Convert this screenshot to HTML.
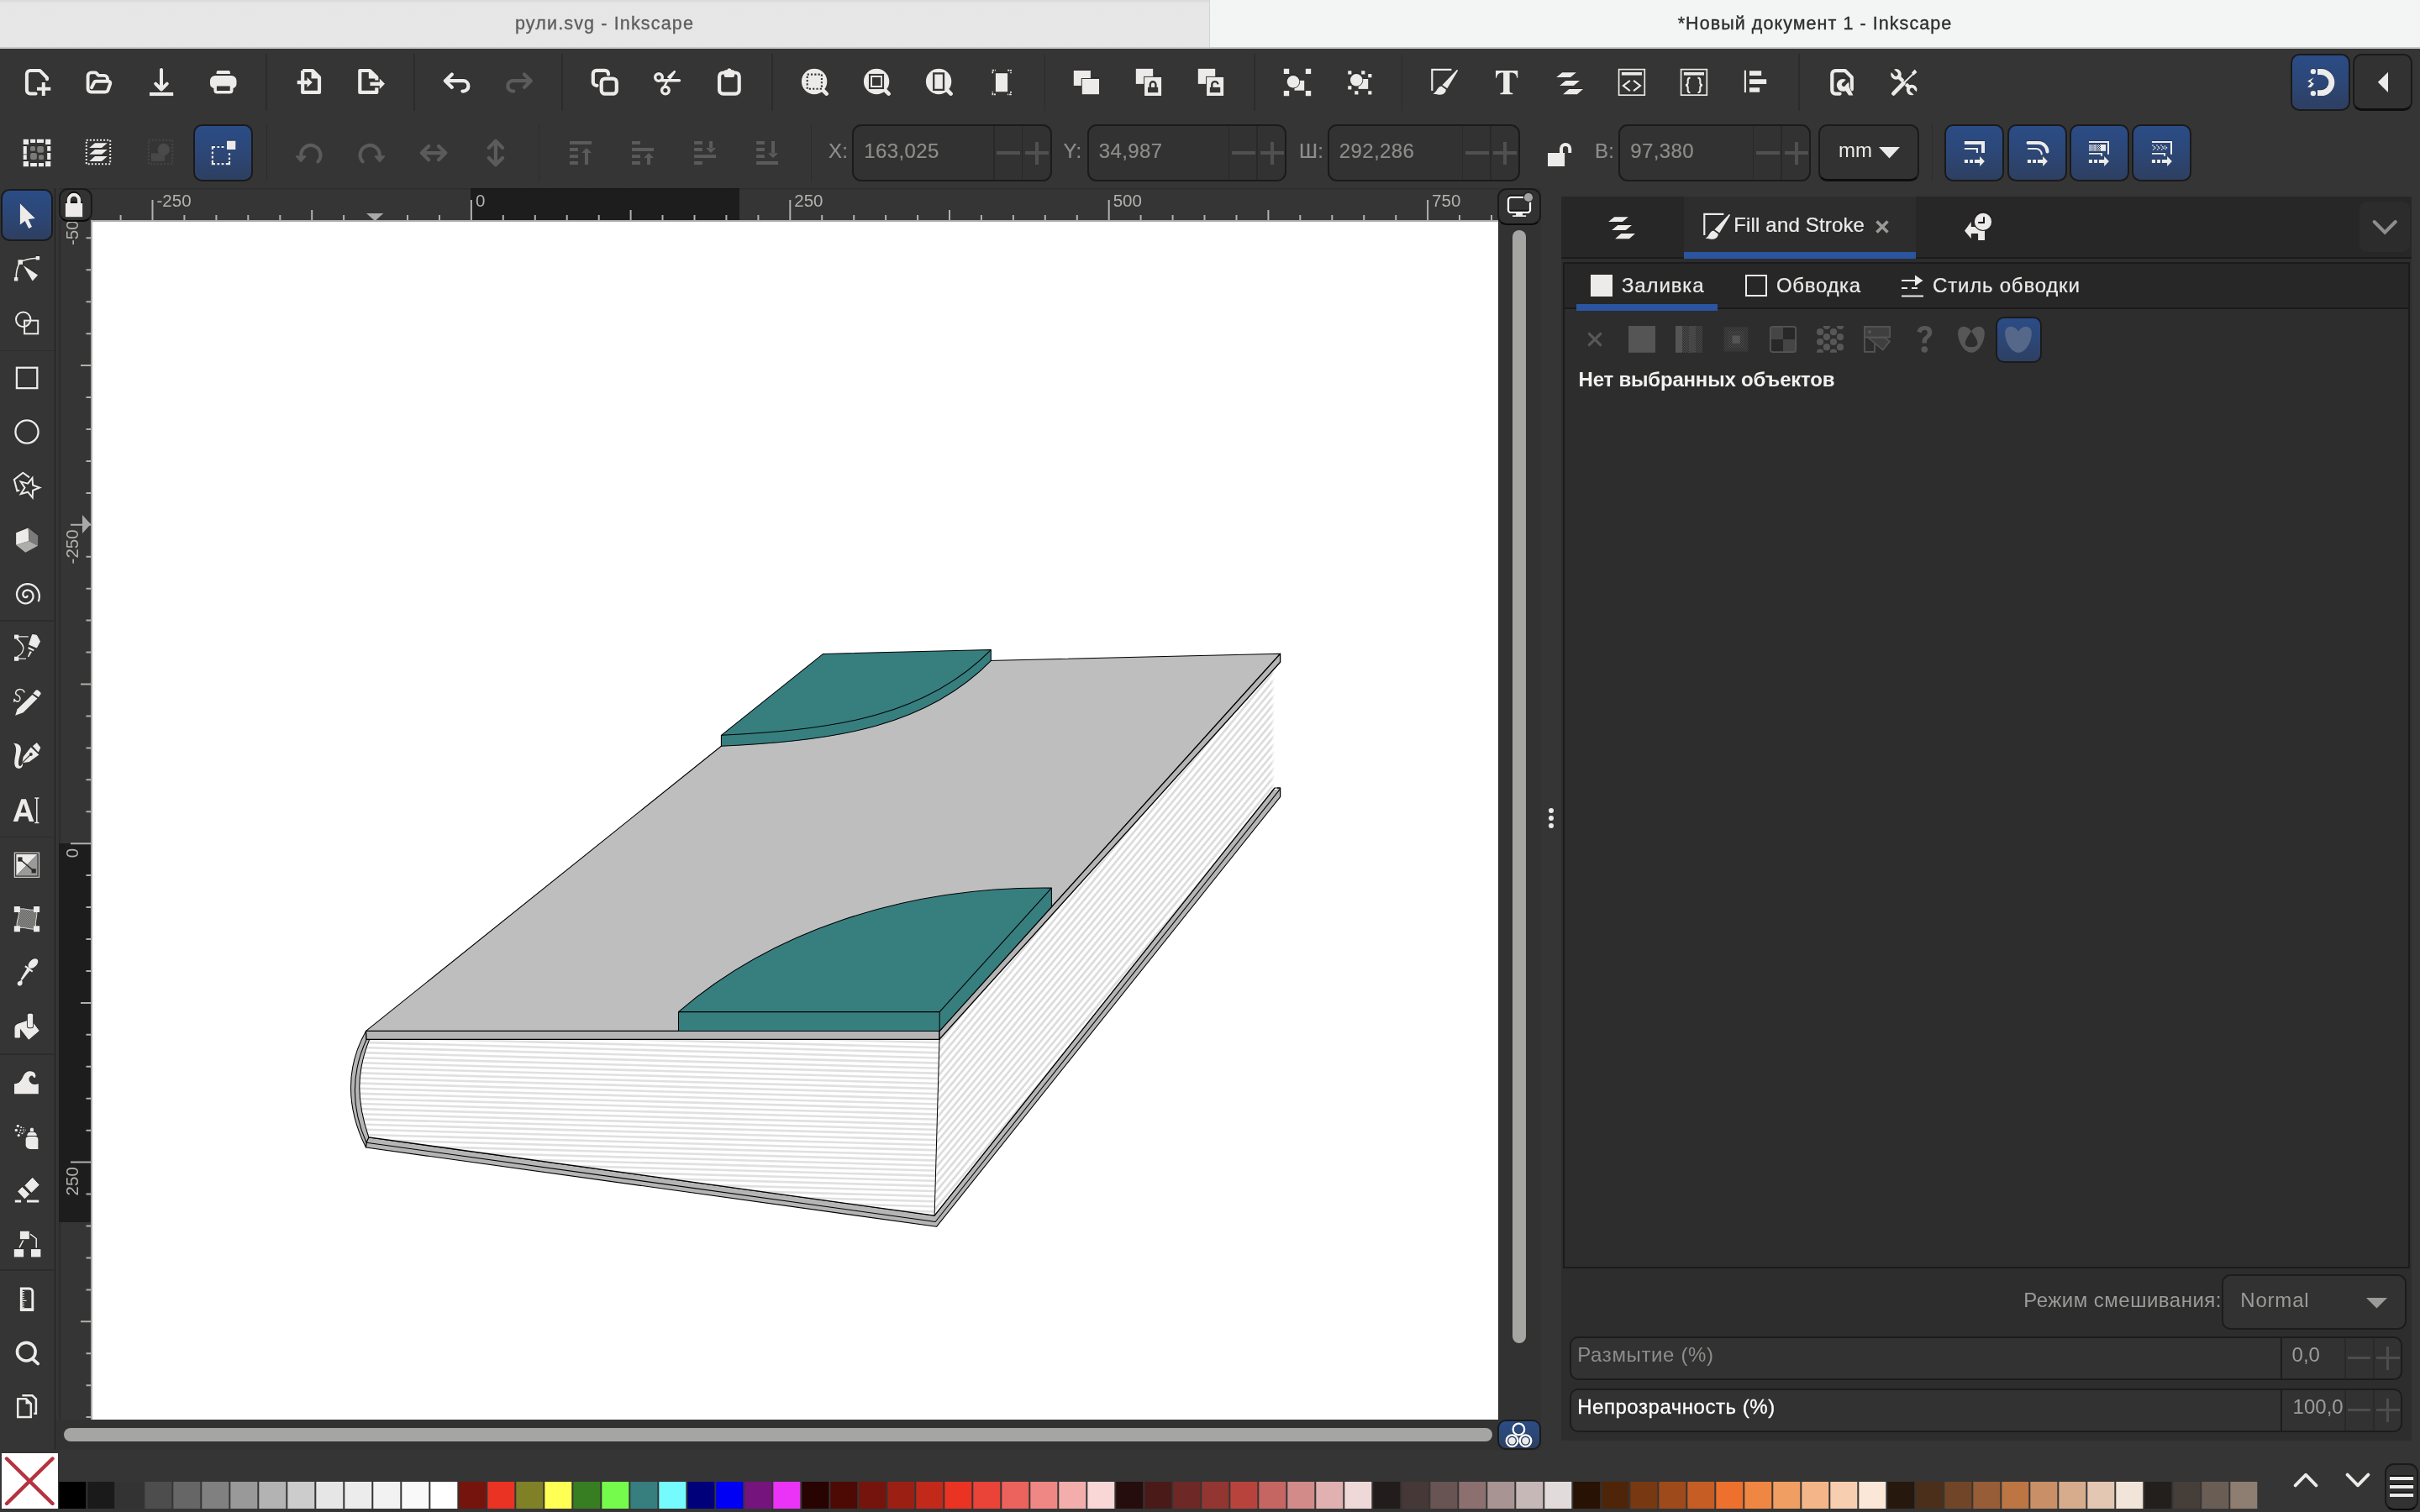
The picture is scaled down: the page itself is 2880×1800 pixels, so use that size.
<!DOCTYPE html><html><head><meta charset="utf-8"><title>Inkscape</title><style>
*{margin:0;padding:0;box-sizing:border-box}
html,body{width:2880px;height:1800px;overflow:hidden;background:#353535;font-family:"Liberation Sans",sans-serif;}
.a{position:absolute}
.ic{position:absolute;width:32px;height:32px;overflow:visible}
.sh{filter:drop-shadow(0 -1px .4px rgba(0,0,0,.24))}
.btn{position:absolute;border-radius:10.5px;border:2px solid #1a1a1a}
.blue{background:linear-gradient(#2b4c86 0%,#2c4777 48%,#2e3f61 100%)}
.dark{background:#323232}
.spin{position:absolute;height:67.4px;top:148.3px;border-radius:11px;border:2px solid #1b1b1b;background:#323232}
.spin .v{position:absolute;left:12px;top:15.7px;letter-spacing:.4px;font-size:24px;color:#8d8d8b;line-height:28px;white-space:nowrap;-webkit-text-stroke:.2px #8d8d8b}
.spin .d{position:absolute;top:0;bottom:0;width:1.5px;background:#292929}
.spin .m{position:absolute;top:30px;height:4px;width:28px;background:#505050}
.spin .p{position:absolute;top:18.4px;height:27.6px;width:4px;background:#505050}
.lbl{position:absolute;font-size:24px;color:#8d8d8b;line-height:28px;top:166px;white-space:nowrap;letter-spacing:.3px;-webkit-text-stroke:.2px #8d8d8b}
.sep{position:absolute;width:1.5px;background:#2c2c2c}
.t{position:absolute;white-space:nowrap}
</style></head><body><div id="root" style="position:absolute;left:0;top:0;width:2880px;height:1800px;will-change:transform;overflow:hidden;background:#353535">
<div class="a" style="left:0;top:0;width:1439px;height:57px;background:linear-gradient(#d9d9d9 0,#e6e6e6 4px,#e7e7e7 100%)"></div>
<div class="a" style="left:1439px;top:0;width:1.5px;height:57px;background:#d2d2d2"></div>
<div class="a" style="left:1440px;top:0;width:1440px;height:57px;background:#f3f5f5"></div>
<div class="a" style="left:0;top:56px;width:2880px;height:1.5px;background:#c9c9c9"></div>
<div class="t" id="t1" style="left:0;width:1439px;top:13.3px;text-align:center;font-size:21.5px;line-height:30px;color:#5e5e5e;letter-spacing:1.15px;-webkit-text-stroke:.35px #5e5e5e">рули.svg - Inkscape</div>
<div class="t" id="t2" style="left:1440px;width:1440px;top:13.3px;text-align:center;font-size:21.5px;line-height:30px;color:#2d2d2d;letter-spacing:1.06px;-webkit-text-stroke:.35px #2d2d2d">*Новый документ 1 - Inkscape</div>
<svg class="ic sh" style="left:29.0px;top:82.0px;width:32px;height:32px;color:#ecebe9;" viewBox="0 0 32 32"><path d="M13.6 29.6H6.9a4 4 0 0 1-4-4V6.1a4 4 0 0 1 4-4H18.6L27 10.6V12.2" fill="none" stroke="currentColor" stroke-width="4" stroke-linecap="round" stroke-linejoin="round"/><path d="M15 23.7H31.3M22.8 16V32" fill="none" stroke="currentColor" stroke-width="4" /></svg>
<svg class="ic sh" style="left:103.0px;top:82.0px;width:32px;height:32px;color:#ecebe9;" viewBox="0 0 32 32"><path d="M6 22.3L9.2 15.9a2 2 0 0 1 1.8-1.1H26.3a2 2 0 0 1 1.9 2.7L25.6 25a3.6 3.6 0 0 1-3.4 2.5H5.6a4 4 0 0 1-4-4V8.4a4 4 0 0 1 4-4H10.3a2 2 0 0 1 1.5.7l2.2 2.4a1.5 1.5 0 0 0 1.1.4H21a4 4 0 0 1 4 4V13.5" fill="none" stroke="currentColor" stroke-width="3.9" stroke-linecap="round" stroke-linejoin="round"/></svg>
<svg class="ic sh" style="left:177.0px;top:82.0px;width:32px;height:32px;color:#ecebe9;" viewBox="0 0 32 32"><path d="M15 0.9V24M8.2 17.7L15 24.5L21.8 17.7" fill="none" stroke="currentColor" stroke-width="4" stroke-linecap="round" stroke-linejoin="round"/><path d="M1 30H29.2" fill="none" stroke="currentColor" stroke-width="4.2" /></svg>
<svg class="ic sh" style="left:251.0px;top:82.0px;width:32px;height:32px;color:#ecebe9;" viewBox="0 0 32 32"><path d="M6.6 6V3.9A1.9 1.9 0 0 1 8.5 2H21A1.9 1.9 0 0 1 22.9 3.9V6Z" fill="currentColor"/><path fill-rule="evenodd" fill="currentColor" d="M5 8H24.5A6 6 0 0 1 30.5 14V17.5A5.5 5.5 0 0 1 26.5 22.9V25.6A4 4 0 0 1 22.5 29.6H7.4A4 4 0 0 1 3.4 25.6V22.9A5.5 5.5 0 0 1-1 17.5V14A6 6 0 0 1 5 8ZM6.9 20.5V26H22.7V20.5Z"/></svg>
<svg class="ic sh" style="left:352.0px;top:82.0px;width:32px;height:32px;color:#ecebe9;" viewBox="0 0 32 32"><path d="M8.2 2H20L28 10V27.9H8.2V2" fill="none" stroke="currentColor" stroke-width="4.2" stroke-linejoin="round"/><path d="M18.5 1.5V11.5H28.5Z" fill="currentColor"/><path d="M1.7 16H14.5" fill="none" stroke="currentColor" stroke-width="4.4" /><path d="M13.5 9.9L19.8 16L13.5 22.1Z" fill="currentColor"/></svg>
<svg class="ic sh" style="left:426.0px;top:82.0px;width:32px;height:32px;color:#ecebe9;" viewBox="0 0 32 32"><path d="M2.3 2H14L22.3 10V27.9H2.3Z" fill="none" stroke="currentColor" stroke-width="4.2" stroke-linejoin="round"/><path d="M12.8 1.5V11.5H22.8Z" fill="currentColor"/><path d="M16 13.5H26V22.4H16Z" fill="#353535"/><path d="M14.4 17.9H27" fill="none" stroke="currentColor" stroke-width="4.4" /><path d="M25.8 11.6L32 17.8L25.8 24Z" fill="currentColor"/></svg>
<svg class="ic sh" style="left:527.0px;top:82.0px;width:32px;height:32px;color:#ecebe9;" viewBox="0 0 32 32"><path d="M10.8 6.4L2.9 14.2L10.8 21.9M3.4 14.2H24.2a6.2 6.2 0 0 1 0 12.4h-.8" fill="none" stroke="currentColor" stroke-width="4.2" stroke-linecap="round" stroke-linejoin="round"/></svg>
<svg class="ic" style="left:601.0px;top:82.0px;width:32px;height:32px;color:#5b5b5b;" viewBox="0 0 32 32"><path d="M22.9 6.4L30.8 14.2L22.9 21.9M30.3 14.2H9.5a6.2 6.2 0 0 0 0 12.4h.8" fill="none" stroke="currentColor" stroke-width="4.2" stroke-linecap="round" stroke-linejoin="round"/></svg>
<svg class="ic sh" style="left:702.0px;top:82.0px;width:32px;height:32px;color:#ecebe9;" viewBox="0 0 32 32"><rect x="13.7" y="11.6" width="18.1" height="18.1" rx="4.3" fill="none" stroke="currentColor" stroke-width="4.2" /><path d="M22 6.4V5.9a4 4 0 0 0-4-4H7.8a4 4 0 0 0-4 4V15.8a4 4 0 0 0 4 4H8.5" fill="none" stroke="currentColor" stroke-width="4.2" stroke-linecap="round" stroke-linejoin="round"/></svg>
<svg class="ic sh" style="left:776.0px;top:82.0px;width:32px;height:32px;color:#ecebe9;" viewBox="0 0 32 32"><circle cx="8" cy="10.1" r="4.3" fill="none" stroke="currentColor" stroke-width="3.4" /><circle cx="15.9" cy="25.6" r="4.3" fill="none" stroke="currentColor" stroke-width="3.4" /><path d="M12 13.8H32.4" fill="none" stroke="currentColor" stroke-width="3.6" stroke-linecap="round" stroke-linejoin="round"/><path d="M14.6 20.8L17.6 15.2M19.5 9.8L26.8 3.2L21.5 11Z" fill="none" stroke="currentColor" stroke-width="2.6" stroke-linecap="round" stroke-linejoin="round"/><path d="M19.6 10L27 2.9L21.8 11.2Z" fill="currentColor"/></svg>
<svg class="ic sh" style="left:850.0px;top:82.0px;width:32px;height:32px;color:#ecebe9;" viewBox="0 0 32 32"><rect x="6.1" y="4.5" width="23.6" height="25.2" rx="4.5" fill="none" stroke="currentColor" stroke-width="4.2" /><path d="M11.7 3.2A2 2 0 0 1 13.7 1.2H15.2A2.9 2.9 0 0 1 20.6 1.2H22.1A2 2 0 0 1 24.1 3.2V8A2.1 2.1 0 0 1 22 10.1H13.8A2.1 2.1 0 0 1 11.7 8Z" fill="currentColor"/></svg>
<svg class="ic sh" style="left:951.0px;top:82.0px;width:32px;height:32px;color:#ecebe9;" viewBox="0 0 32 32"><circle cx="18.1" cy="15" r="15.2" fill="currentColor"/><path d="M28 25L32.6 29.6" fill="none" stroke="currentColor" stroke-width="4.6" stroke-linecap="round" stroke-linejoin="round"/><rect x="9.7" y="6.6" width="17.2" height="17.2" fill="none" stroke="#353535" stroke-width="2.1" stroke-dasharray="2.15 2.15"/></svg>
<svg class="ic sh" style="left:1025.0px;top:82.0px;width:32px;height:32px;color:#ecebe9;" viewBox="0 0 32 32"><circle cx="18.1" cy="15" r="15.2" fill="currentColor"/><path d="M28 25L32.6 29.6" fill="none" stroke="currentColor" stroke-width="4.6" stroke-linecap="round" stroke-linejoin="round"/><rect x="10" y="7" width="16" height="16" fill="none" stroke="#353535" stroke-width="2.1"/><rect x="13" y="10" width="10.2" height="10" fill="#353535"/></svg>
<svg class="ic sh" style="left:1099.0px;top:82.0px;width:32px;height:32px;color:#ecebe9;" viewBox="0 0 32 32"><circle cx="18.1" cy="15" r="15.2" fill="currentColor"/><path d="M28 25L32.6 29.6" fill="none" stroke="currentColor" stroke-width="4.6" stroke-linecap="round" stroke-linejoin="round"/><rect x="12.2" y="5.4" width="11.8" height="19.5" fill="none" stroke="#353535" stroke-width="2.3"/></svg>
<svg class="ic sh" style="left:1173.0px;top:82.0px;width:32px;height:32px;color:#ecebe9;" viewBox="0 0 32 32"><rect x="11.9" y="5.2" width="14.2" height="22" fill="currentColor"/><path d="M8.3 5.2V1.6H11.9M26.1 1.6H30V5.2M30 26.8V30.4H26.1M11.9 30.4H8.3V26.8" fill="none" stroke="currentColor" stroke-width="1.6" stroke-dasharray='2.2 1'/></svg>
<svg class="ic sh" style="left:1274.0px;top:82.0px;width:32px;height:32px;color:#ecebe9;" viewBox="0 0 32 32"><rect x="3.8" y="2" width="20.1" height="18" fill="currentColor"/><rect x="13.8" y="12" width="20.2" height="18.2" fill="currentColor" stroke="#353535" stroke-width="2" paint-order="stroke"/></svg>
<svg class="ic sh" style="left:1348.0px;top:82.0px;width:32px;height:32px;color:#ecebe9;" viewBox="0 0 32 32"><rect x="3.8" y="-.2" width="20.4" height="18.1" fill="currentColor"/><rect x="14.1" y="9.9" width="20" height="22.1" fill="currentColor" stroke="#353535" stroke-width="2" paint-order="stroke"/><rect x="18" y="21.9" width="12.2" height="6.3" fill="#353535"/><path d="M20.8 22V18.6a3.3 3.3 0 0 1 6.6 0V22" fill="none" stroke="#353535" stroke-width="2.4"/></svg>
<svg class="ic sh" style="left:1422.0px;top:82.0px;width:32px;height:32px;color:#ecebe9;" viewBox="0 0 32 32"><rect x="3.8" y="-.2" width="20.4" height="18.1" fill="currentColor"/><rect x="14.1" y="9.9" width="20" height="22.1" fill="currentColor" stroke="#353535" stroke-width="2" paint-order="stroke"/><rect x="17.8" y="21.9" width="12.4" height="6.3" fill="#353535"/><path d="M20.3 22V19a3.6 3.6 0 0 1 7.2-.6" fill="none" stroke="#353535" stroke-width="2.4"/></svg>
<svg class="ic sh" style="left:1523.0px;top:82.0px;width:32px;height:32px;color:#ecebe9;" viewBox="0 0 32 32"><path d="M4.8-.2H11.2V6.1H4.8ZM30.8-.2H37.2V6.1H30.8ZM4.8 25.9H11.2V32.2H4.8ZM30.8 25.9H37.2V32.2H30.8Z" fill="currentColor"/><rect x="17.5" y="13.8" width="11.7" height="11.9" fill="currentColor"/><circle cx="16" cy="15.3" r="7.3" fill="currentColor" stroke="#353535" stroke-width="1.8" paint-order="stroke"/></svg>
<svg class="ic sh" style="left:1604.0px;top:82.0px;width:32px;height:32px;color:#ecebe9;" viewBox="0 0 32 32"><path d="M.2 2.2H4.4V6.4H.2ZM16.2 2.2H20.4V6.4H16.2ZM24.2 6H28.4V10.2H24.2ZM.2 20.2H4.4V24.4H.2ZM8.2 26.2H12.4V30.4H8.2ZM24.2 26.2H28.4V30.4H24.2Z" fill="currentColor"/><rect x="12.6" y="12" width="11.6" height="11.9" fill="currentColor"/><circle cx="10.2" cy="13.3" r="7.2" fill="currentColor" stroke="#353535" stroke-width="1.8" paint-order="stroke"/></svg>
<svg class="ic sh" style="left:1703.4px;top:82.0px;width:32px;height:32px;color:#ecebe9;" viewBox="0 0 32 32"><path d="M1.3 26V.9H24.4" fill="none" stroke="currentColor" stroke-width="2.2" /><path d="M30.6 1.2C31.5 .8 32.3 1.6 31.8 2.5L19.3 23.2L13.4 19.2Z" fill="currentColor"/><path d="M12.3 20.6L17.8 24.4C18 29.5 12 32.6 2.5 29.6C7.5 27.5 7 21.5 12.3 20.6Z" fill="currentColor"/></svg>
<svg class="ic sh" style="left:1777.0px;top:82.0px;width:32px;height:32px;color:#ecebe9;" viewBox="0 0 32 32"><path d="M3 2.1H29.3V10.7H28.3C27.6 6.6 25.6 4.4 21.6 4.4H19.6V26C19.6 28 20.3 28.6 23.3 28.7V30.3H8.4V28.7C11.4 28.6 12.1 28 12.1 26V4.4H10.7C6.7 4.4 4.7 6.6 4 10.7H3Z" fill="currentColor"/></svg>
<svg class="ic sh" style="left:1852.0px;top:82.0px;width:32px;height:32px;color:#ecebe9;" viewBox="0 0 32 32"><path d="M.1 9.9L7.2 4.2H23.9L16.9 9.9ZM4.1 20L11.3 14.1H28L20.8 20ZM8.1 30.2L15.3 24.1H32L24.9 30.2Z" fill="currentColor"/></svg>
<svg class="ic sh" style="left:1926.0px;top:82.0px;width:32px;height:32px;color:#ecebe9;" viewBox="0 0 32 32"><rect x=".6" y=".6" width="30.7" height="30.6" fill="none" stroke="currentColor" stroke-width="1.7" /><rect x="3.9" y="3.9" width="24.1" height="3.7" fill="currentColor"/><path d="M13.8 13.8L5.9 20L13.8 26.2M18.1 13.8L26 20L18.1 26.2" fill="none" stroke="currentColor" stroke-width="2.2" /></svg>
<svg class="ic sh" style="left:2000.0px;top:82.0px;width:32px;height:32px;color:#ecebe9;" viewBox="0 0 32 32"><rect x=".6" y=".6" width="30.7" height="30.6" fill="none" stroke="currentColor" stroke-width="1.7" /><rect x="3.9" y="3.9" width="24.1" height="3.7" fill="currentColor"/><path d="M11.5 10.6C9 10.6 8.7 11.8 8.7 13.5V16.3C8.7 18 8 19.2 6 19.4C8 19.6 8.7 20.8 8.7 22.5V25.3C8.7 27 9 28.2 11.5 28.2M20.5 10.6C23 10.6 23.3 11.8 23.3 13.5V16.3C23.3 18 24 19.2 26 19.4C24 19.6 23.3 20.8 23.3 22.5V25.3C23.3 27 23 28.2 20.5 28.2" fill="none" stroke="currentColor" stroke-width="2.1" /></svg>
<svg class="ic sh" style="left:2073.0px;top:82.0px;width:32px;height:32px;color:#ecebe9;" viewBox="0 0 32 32"><path d="M3.9 1.7V28.1" fill="none" stroke="currentColor" stroke-width="2.1" /><path d="M9 2.3H23.2V7.9H9ZM9 12.2H29.2V17.9H9ZM9 22.3H21.1V27.8H9Z" fill="currentColor"/></svg>
<svg class="ic sh" style="left:2176.0px;top:82.0px;width:32px;height:32px;color:#ecebe9;" viewBox="0 0 32 32"><path d="M13.6 29.6H8.3a4 4 0 0 1-4-4V6.1a4 4 0 0 1 4-4H19.8L27.8 10.1V24.4" fill="none" stroke="currentColor" stroke-width="4.2" stroke-linecap="round" stroke-linejoin="round"/><circle cx="17.3" cy="19.4" r="8.6" fill="#353535"/><path d="M18 22.5L24 20.5L29.4 31.4H24.2Z" fill="currentColor" stroke="#353535" stroke-width="1.2" paint-order="stroke"/><circle cx="17.3" cy="19.4" r="7.4" fill="currentColor"/><g transform="rotate(-45 17.3 19.4)"><rect x="18.3" y="17.3" width="9" height="4.2" fill="#353535"/><circle cx="18.6" cy="19.4" r="2.4" fill="#353535"/></g></svg>
<svg class="ic sh" style="left:2250.0px;top:82.0px;width:32px;height:32px;color:#ecebe9;" viewBox="0 0 32 32"><path d="M6.5 6.4L25.1 25" fill="none" stroke="currentColor" stroke-width="4.4" /><circle cx="6.5" cy="6.4" r="6.3" fill="currentColor"/><circle cx="25.1" cy="25" r="6.3" fill="currentColor"/><g transform="rotate(-135 6.5 6.4)"><rect x="6.5" y="4" width="8" height="4.8" fill="#353535"/><circle cx="6.9" cy="6.4" r="2.6" fill="#353535"/></g><g transform="rotate(45 25.1 25)"><rect x="25.1" y="22.6" width="8" height="4.8" fill="#353535"/><circle cx="25.5" cy="25" r="2.6" fill="#353535"/></g><path d="M28.5 4.5L13 20" stroke="#353535" stroke-width="5" fill="none"/><path d="M15.4 17L3.4 29.4" fill="none" stroke="currentColor" stroke-width="4.8" stroke-linecap="round" stroke-linejoin="round"/><path d="M27.2 5.6L15.4 17" fill="none" stroke="currentColor" stroke-width="1.9" /><path d="M28.8 .6L31.4 3.9L27.4 7.8L24.9 4.6Z" fill="currentColor"/></svg>
<div class="sep" style="left:316.3px;top:64px;height:68px"></div>
<div class="sep" style="left:492.3px;top:64px;height:68px"></div>
<div class="sep" style="left:668.0px;top:64px;height:68px"></div>
<div class="sep" style="left:918.0px;top:64px;height:68px"></div>
<div class="sep" style="left:1242.6px;top:64px;height:68px"></div>
<div class="sep" style="left:1492.3px;top:64px;height:68px"></div>
<div class="sep" style="left:1667.9px;top:64px;height:68px"></div>
<div class="sep" style="left:2140.0px;top:64px;height:68px"></div>
<div class="btn blue" style="left:2726.3px;top:64.2px;width:71.1px;height:67.4px"></div>
<svg class="ic sh" style="left:2746.0px;top:82.0px;width:32px;height:32px;color:#ecebe9;" viewBox="0 0 32 32"><circle cx="6.9" cy="3.1" r="3.2" fill="currentColor"/><circle cx="6.9" cy="29.1" r="3.2" fill="currentColor"/><path d="M12 .1H16.3A16 16 0 0 1 16.3 32.1H12V25.2H16.3A9.1 9.1 0 0 0 16.3 7H12Z" fill="currentColor"/><path d="M7.4 10.2L.1 14.4L4.4 17L.1 22H4.1L8 17.7L3.8 15Z" fill="currentColor"/></svg>
<div class="btn dark" style="left:2800.3px;top:64.2px;width:71.1px;height:67.6px;border-bottom:3px solid #0e0e0e"></div>
<svg class="ic sh" style="left:2820.0px;top:82.0px;width:32px;height:32px;color:#ecebe9;" viewBox="0 0 32 32"><path d="M9.8 15.8L22 3.8V27.9Z" fill="currentColor"/></svg>
<svg class="ic sh" style="left:28.0px;top:166.0px;width:32px;height:32px;color:#ecebe9;" viewBox="0 0 32 32"><path d="M-.3-.2H6V6.1H-.3ZM26.1-.2H32.3V6.1H26.1ZM-.3 25.9H6V32.2H-.3ZM26.1 25.9H32.3V32.2H26.1Z" fill="currentColor"/><path d="M8.1-.2H14.1V3.9H8.1ZM15.9-.2H24V3.9H15.9ZM8.1 28.1H15.9V32.2H8.1ZM18 28.1H24V32.2H18ZM-.3 8H3.8V17.6H-.3ZM-.3 18.2H3.8V24.1H-.3ZM28.2 8H32.3V13.8H28.2ZM28.2 16H32.3V24.1H28.2Z" fill="currentColor"/><rect x="8.1" y="8" width="5.9" height="5.8" rx="1.6" fill="#7b7b79"/><rect x="16.2" y="8" width="7.8" height="7.7" rx="2" fill="#7b7b79"/><rect x="8.1" y="16" width="7.8" height="8.1" rx="2" fill="#7b7b79"/><rect x="18" y="18.2" width="6" height="5.9" rx="1.6" fill="#7b7b79"/></svg>
<svg class="ic sh" style="left:101.0px;top:166.0px;width:32px;height:32px;color:#ecebe9;" viewBox="0 0 32 32"><rect x="1.8" y=".8" width="28.4" height="28.4" fill="none" stroke="currentColor" stroke-width="2" stroke-dasharray='2.03 2.03'/><path d="M5.2 9.9L12 4.2H26.8L20 9.9ZM5.2 17.8L12 12H26.8L20 17.8ZM5.2 25.9L12 20H26.8L20 25.9Z" fill="currentColor"/></svg>
<svg class="ic" style="left:175.0px;top:166.0px;width:32px;height:32px;color:#5b5b5b;" viewBox="0 0 32 32"><rect x="1.8" y=".8" width="28.4" height="28.4" fill="none" stroke="#464646" stroke-width="2" stroke-dasharray="2.03 2.03"/><rect x="4.9" y="16.3" width="16.1" height="9.6" fill="#484848"/><circle cx="19.8" cy="12" r="7.2" fill="#4a4a4a"/></svg>
<div class="btn blue" style="left:230.4px;top:148.2px;width:71.1px;height:67.6px"></div>
<svg class="ic sh" style="left:250.0px;top:166.0px;width:32px;height:32px;color:#ecebe9;" viewBox="0 0 32 32"><rect x="20" y="1.7" width="10.3" height="10.3" fill="currentColor"/><path d="M2.9 12V9H6M8.4 9H11.2M13.6 9H16.4M2.9 14.4V17.2M2.9 19.6V22.4M2.9 24.8V29.1H6M8.4 29.1H11.2M13.6 29.1H16.4M18.8 29.1H23V26M23 24.2V21.4M23 19V16.2" fill="none" stroke="currentColor" stroke-width="2.2" /></svg>
<div class="sep" style="left:316.5px;top:148px;height:68px"></div>
<svg class="ic" style="left:352.0px;top:167.0px;width:32px;height:32px;color:#5b5b5b;" viewBox="0 0 32 32"><path d="M6.2 17.6A11.6 11.6 0 1 1 26.4 25.4" fill="none" stroke="currentColor" stroke-width="4.1" stroke-linecap="round" stroke-linejoin="round"/><path d="M.8 19.2H11.4L6.1 25Z" fill="currentColor" stroke="currentColor" stroke-width="2" stroke-linejoin="round"/></svg>
<svg class="ic" style="left:426.0px;top:167.0px;width:32px;height:32px;color:#5b5b5b;" viewBox="0 0 32 32"><path d="M25.8 17.6A11.6 11.6 0 1 0 5.6 25.4" fill="none" stroke="currentColor" stroke-width="4.1" stroke-linecap="round" stroke-linejoin="round"/><path d="M31.2 19.2H20.6L25.9 25Z" fill="currentColor" stroke="currentColor" stroke-width="2" stroke-linejoin="round"/></svg>
<svg class="ic" style="left:500.0px;top:166.0px;width:32px;height:32px;color:#5b5b5b;" viewBox="0 0 32 32"><path d="M10.1 7.9L1.9 16.1L10.1 24.3M22 7.9L30.2 16.1L22 24.3M2.5 16.1H29.6" fill="none" stroke="currentColor" stroke-width="4.2" stroke-linecap="round" stroke-linejoin="round"/></svg>
<svg class="ic" style="left:574.0px;top:166.0px;width:32px;height:32px;color:#5b5b5b;" viewBox="0 0 32 32"><path d="M7.7 10L15.9 1.8L24.1 10M7.7 22L15.9 30.2L24.1 22M15.9 2.4V29.6" fill="none" stroke="currentColor" stroke-width="4.2" stroke-linecap="round" stroke-linejoin="round"/></svg>
<div class="sep" style="left:640.5px;top:148px;height:68px"></div>
<svg class="ic" style="left:675.0px;top:166.0px;width:32px;height:32px;color:#5b5b5b;" viewBox="0 0 32 32"><path d="M3 2.1H29V6H3ZM3 10.1H12.9V14.1H3ZM3 18.2H12.9V22.1H3ZM3 26H12.9V30H3ZM21 15.5H25V30H21ZM17.2 15.9L23 10.1L29 15.9Z" fill="currentColor"/></svg>
<svg class="ic" style="left:749.0px;top:166.0px;width:32px;height:32px;color:#5b5b5b;" viewBox="0 0 32 32"><path d="M3 2.1H12.9V6H3ZM3 10.1H29V14.1H3ZM3 18.2H12.9V22.1H3ZM3 26H12.9V30H3ZM21 21.5H25V30H21ZM17.2 21.9L23 16.1L29 21.9Z" fill="currentColor"/></svg>
<svg class="ic" style="left:823.0px;top:166.0px;width:32px;height:32px;color:#5b5b5b;" viewBox="0 0 32 32"><path d="M3.1 2.1H12.9V6H3.1ZM3.1 10.1H12.9V14.1H3.1ZM3.1 18.2H29.1V22.1H3.1ZM3.1 26H12.9V30H3.1ZM21.1 2.1H25V10.5H21.1ZM17.1 10.1L23 16.1L29.1 10.1Z" fill="currentColor"/></svg>
<svg class="ic" style="left:897.0px;top:166.0px;width:32px;height:32px;color:#5b5b5b;" viewBox="0 0 32 32"><path d="M3.1 2.1H12.9V6H3.1ZM3.1 10.1H12.9V14.1H3.1ZM3.1 18.2H12.9V22.1H3.1ZM3.1 26H29.1V30H3.1ZM21.1 2.1H25V16.7H21.1ZM17.1 16.3L23 22.1L29.1 16.3Z" fill="currentColor"/></svg>
<div class="sep" style="left:964.5px;top:148px;height:68px"></div>
<div class="lbl" style="left:986px">X:</div>
<div class="spin" style="left:1014.3px;width:237.5px"><div class="v">163,025</div><div class="d" style="right:66.1px"></div><div class="d" style="right:32.5px"></div><div class="m" style="right:35.7px"></div><div class="m" style="right:1.8px"></div><div class="p" style="right:13.8px"></div></div>
<div class="lbl" style="left:1265.5px">Y:</div>
<div class="spin" style="left:1293.8px;width:237.7px"><div class="v">34,987</div><div class="d" style="right:66.1px"></div><div class="d" style="right:32.5px"></div><div class="m" style="right:35.7px"></div><div class="m" style="right:1.8px"></div><div class="p" style="right:13.8px"></div></div>
<div class="lbl" style="left:1546px">Ш:</div>
<div class="spin" style="left:1579.8px;width:229.4px"><div class="v">292,286</div><div class="d" style="right:66.1px"></div><div class="d" style="right:32.5px"></div><div class="m" style="right:35.7px"></div><div class="m" style="right:1.8px"></div><div class="p" style="right:13.8px"></div></div>
<svg class="ic sh" style="left:1840.0px;top:168.0px;width:32px;height:32px;color:#ecebe9;" viewBox="0 0 32 32"><rect x="2" y="14" width="20.1" height="16" fill="currentColor"/><path d="M18 14.5V9A5.1 5.1 0 0 1 28.2 9V14" fill="none" stroke="currentColor" stroke-width="4" /></svg>
<div class="lbl" style="left:1898px">В:</div>
<div class="spin" style="left:1926.2px;width:229.2px"><div class="v">97,380</div><div class="d" style="right:66.1px"></div><div class="d" style="right:32.5px"></div><div class="m" style="right:35.7px"></div><div class="m" style="right:1.8px"></div><div class="p" style="right:13.8px"></div></div>
<div class="btn dark" style="left:2164.2px;top:148.2px;width:119.6px;height:67.8px;border-bottom:3px solid #0e0e0e"></div>
<div class="t" style="left:2188px;top:164.5px;font-size:24px;line-height:28px;color:#ecebe9">mm</div>
<svg class="a" style="left:2235.5px;top:175px" width="25" height="14" viewBox="0 0 25 14"><path d="M0 0H25L12.5 13.5Z" fill="#ecebe9"/></svg>
<div class="sep" style="left:2298.5px;top:148px;height:68px"></div>
<div class="btn blue" style="left:2314.3px;top:148.2px;width:71.1px;height:67.6px"></div>
<svg class="ic sh" style="left:2334.0px;top:167.0px;width:32px;height:32px;color:#ecebe9;" viewBox="0 0 32 32"><path d="M3.9 23H8V27.1H3.9ZM10.1 23H14V27.1H10.1ZM15.9 23H22.5V27.1H15.9ZM22.1 19L27.9 25L22.1 30.9Z" fill="currentColor"/><path d="M3.9 1.1H28V15H24V5H3.9ZM3.9 8.9H20V15H17.9V11H3.9Z" fill="currentColor"/></svg>
<div class="btn blue" style="left:2388.5px;top:148.2px;width:71.1px;height:67.6px"></div>
<svg class="ic sh" style="left:2409.2px;top:167.0px;width:32px;height:32px;color:#ecebe9;" viewBox="0 0 32 32"><path d="M3.9 23H8V27.1H3.9ZM10.1 23H14V27.1H10.1ZM15.9 23H22.5V27.1H15.9ZM22.1 19L27.9 25L22.1 30.9Z" fill="currentColor"/><path d="M4.5 3H17A10.5 10.5 0 0 1 27.5 13.5" fill="none" stroke="currentColor" stroke-width="4" stroke-linecap="round" stroke-linejoin="round"/><path d="M4.9 10H14.2A6.5 6.5 0 0 1 20.7 16.5" fill="none" stroke="currentColor" stroke-width="2.1" stroke-linecap="round" stroke-linejoin="round"/></svg>
<div class="btn blue" style="left:2462.7px;top:148.2px;width:71.1px;height:67.6px"></div>
<svg class="ic sh" style="left:2482.4px;top:167.0px;width:32px;height:32px;color:#ecebe9;" viewBox="0 0 32 32"><path d="M3.9 23H8V27.1H3.9ZM10.1 23H14V27.1H10.1ZM15.9 23H22.5V27.1H15.9ZM22.1 19L27.9 25L22.1 30.9Z" fill="currentColor"/><path d="M4 1.1H28V16.8H26V2.9H4ZM4 15.1H20.1V18.8H18V16.8H4Z" fill="currentColor"/><defs><pattern id="chk" width="2" height="2" patternUnits="userSpaceOnUse"><rect width="1" height="1" fill="#ecebe9"/><rect x="1" y="1" width="1" height="1" fill="#ecebe9"/></pattern></defs><rect x="4" y="5" width="8" height="7.8" fill="#8e9bb8"/><rect x="4" y="5" width="3" height="7.8" fill="url(#chk)" opacity=".5"/><rect x="10.5" y="5" width="8" height="7.8" fill="url(#chk)"/><rect x="18" y="5" width="6" height="7.8" fill="currentColor"/></svg>
<div class="btn blue" style="left:2536.9px;top:148.2px;width:71.1px;height:67.6px"></div>
<svg class="ic sh" style="left:2556.6px;top:167.0px;width:32px;height:32px;color:#ecebe9;" viewBox="0 0 32 32"><path d="M3.9 23H8V27.1H3.9ZM10.1 23H14V27.1H10.1ZM15.9 23H22.5V27.1H15.9ZM22.1 19L27.9 25L22.1 30.9Z" fill="currentColor"/><path d="M4 1.1H28V16.8H26V2.9H4ZM4 15.1H20.1V18.8H18V16.8H4Z" fill="currentColor"/><path d="M4.5 5.5L8 8.9L4.5 12.3M9.5 5.5L13 8.9L9.5 12.3M14.5 5.5L18 8.9L14.5 12.3M19 6.5L21.5 8.9L19 11.3" fill="none" stroke="currentColor" stroke-width="1.5" stroke-dasharray="1.4 1"/></svg>
<div class="a" style="left:64.6px;top:224px;width:1.9px;height:1502px;background:#1f1f1f"></div>
<div class="btn blue" style="left:1.2px;top:225.4px;width:61.4px;height:61.6px"></div>
<svg class="ic sh" style="left:16.0px;top:240.5px;width:32px;height:32px;color:#ecebe9;" viewBox="0 0 32 32"><path d="M7.9 1.3V26.4L13.7 21.9L18.2 30.9L22 29L17.8 20L25.9 19.1Z" fill="currentColor"/></svg>
<svg class="ic sh" style="left:16.0px;top:303.0px;width:32px;height:32px;color:#ecebe9;" viewBox="0 0 32 32"><path d="M3.1 29.3C3.1 20 5 13 8.2 9C13 6 20 4.5 28.9 4.2" fill="none" stroke="currentColor" stroke-width="1.6" /><rect x=".9" y="27.1" width="4.4" height="4.4" fill="currentColor"/><rect x="5.4" y="6.2" width="5.6" height="5.6" fill="currentColor"/><rect x="26.7" y="2" width="4.4" height="4.4" fill="currentColor"/><path d="M11.7 12.9L29.1 24.5L22.7 31.6Z" fill="currentColor"/></svg>
<svg class="ic sh" style="left:16.0px;top:368.5px;width:32px;height:32px;color:#ecebe9;" viewBox="0 0 32 32"><path d="M13.1 12.6H20.2A8.7 8.7 0 0 1 13.1 19.9Z" fill="#585856"/><circle cx="11.7" cy="11.3" r="8.7" fill="none" stroke="currentColor" stroke-width="2" /><rect x="13.1" y="12.6" width="16.1" height="15.7" fill="none" stroke="currentColor" stroke-width="2" /></svg>
<svg class="ic sh" style="left:16.0px;top:434.0px;width:32px;height:32px;color:#ecebe9;" viewBox="0 0 32 32"><rect x="3.9" y="3.7" width="24.4" height="24.4" fill="none" stroke="currentColor" stroke-width="2.3" /></svg>
<svg class="ic sh" style="left:16.0px;top:498.0px;width:32px;height:32px;color:#ecebe9;" viewBox="0 0 32 32"><circle cx="16" cy="16" r="13.6" fill="none" stroke="currentColor" stroke-width="2.3" /></svg>
<svg class="ic sh" style="left:16.0px;top:562.0px;width:32px;height:32px;color:#ecebe9;" viewBox="0 0 32 32"><path d="M7.3 21.6L4.4 22.4L.9 9L11.3 .7L19 6.4" fill="none" stroke="currentColor" stroke-width="2.1" /><path d="M22.5 6.8L23.1 15.5L31.2 18.5L23.1 21.7L22.7 30.4L17.2 23.7L8.8 26.0L13.5 18.6L8.7 11.4L17.1 13.6Z" fill="none" stroke="currentColor" stroke-width="2" /></svg>
<svg class="ic sh" style="left:16.0px;top:626.5px;width:32px;height:32px;color:#ecebe9;" viewBox="0 0 32 32"><path d="M3.1 7.2L17.6 1.4L18.5 16.9L3.1 21.7Z" fill="currentColor"/><path d="M17.8 1.4L29.1 10.4V22.7L18.6 16.9Z" fill="#7b7b79"/><path d="M3.1 21.7L18.5 16.9L29.1 22.7L14.3 30.7Z" fill="#adadab"/></svg>
<svg class="ic sh" style="left:16.0px;top:691.5px;width:32px;height:32px;color:#ecebe9;" viewBox="0 0 32 32"><path d="M16.53 17.66L16.46 17.94L16.32 18.22L16.12 18.48L15.85 18.71L15.53 18.90L15.16 19.04L14.74 19.11L14.29 19.11L13.83 19.03L13.36 18.86L12.90 18.61L12.48 18.27L12.10 17.84L11.78 17.34L11.53 16.77L11.38 16.14L11.32 15.47L11.38 14.77L11.55 14.06L11.84 13.37L12.25 12.71L12.77 12.11L13.41 11.57L14.14 11.13L14.95 10.80L15.83 10.59L16.76 10.51L17.72 10.59L18.67 10.82L19.61 11.20L20.50 11.73L21.31 12.42L22.03 13.23L22.63 14.18L23.08 15.22L23.38 16.35L23.51 17.54L23.45 18.75L23.20 19.98L22.76 21.17L22.13 22.30L21.32 23.35L20.34 24.28L19.21 25.07L17.95 25.68L16.58 26.11L15.14 26.32L13.66 26.32L12.17 26.09L10.71 25.62L9.31 24.93L8.00 24.02L6.84 22.91L5.84 21.61L5.03 20.15L4.44 18.56L4.10 16.87L4.01 15.13L4.19 13.37L4.64 11.62L5.36 9.95L6.34 8.37L7.56 6.94L9.00 5.70L10.63 4.67L12.43 3.89L14.35 3.38L16.34 3.17L18.38 3.26L20.40 3.66L22.37 4.36L24.23 5.37L25.94 6.67L27.45 8.22L28.73 10.01L29.73 11.99L30.44 14.12L30.82 16.37L30.86 18.67L30.55 20.97L29.89 23.23" fill="none" stroke="currentColor" stroke-width="2.3" stroke-linecap="round" stroke-linejoin="round"/></svg>
<svg class="ic sh" style="left:16.0px;top:755.0px;width:32px;height:32px;color:#ecebe9;" viewBox="0 0 32 32"><rect x="1" y=".6" width="5.2" height="5" fill="currentColor"/><rect x="1" y="26.7" width="5.2" height="5.1" fill="currentColor"/><path d="M6 2.8H17.8M6 29.2H15" fill="none" stroke="currentColor" stroke-width="1.3" /><path d="M4 5.6C10 10 12.5 15 11.7 18C11 22 8 25 4.6 26.7" fill="none" stroke="currentColor" stroke-width="1.4" /><path d="M22.5 .6L27.5 1.2L31.5 8.6L27.6 16L18.6 12.2Z" fill="currentColor" stroke="currentColor" stroke-width="1" stroke-linejoin="round"/><path d="M17.8 15.1L24.6 18.3L24 20.2L17.3 17.3Z" fill="currentColor"/><path d="M19.5 20.2L22 21.1L18.2 27.3L16.9 26.7Z" fill="currentColor"/></svg>
<svg class="ic sh" style="left:16.0px;top:819.5px;width:32px;height:32px;color:#ecebe9;" viewBox="0 0 32 32"><path d="M26.6 1.8A2 2 0 0 1 29 1.6L32 4A2 2 0 0 1 32.4 6.3L29.8 10.1L23.3 5.6Z" fill="currentColor"/><path d="M22.4 6.9L28.5 11.4L11.7 28.2L2.1 31.7L4.6 24.3Z" fill="currentColor"/><path d="M13 3.9C12 1 8.5 -.3 5.5 1C2 2.5 1.6 6.5 5 7.6C8.5 9 8.8 13 6.5 14.6C4.5 16 2 14.5 1 12.2M1 12.2L.8 15.3" fill="none" stroke="currentColor" stroke-width="1.5" stroke-linecap="round" stroke-linejoin="round"/></svg>
<svg class="ic sh" style="left:16.0px;top:883.5px;width:32px;height:32px;color:#ecebe9;" viewBox="0 0 32 32"><path d="M.1 .7C7 1 10 4.5 8.6 11C7.5 16.5 5.2 22 6.2 26.2C6.8 28.6 8.4 28.6 9.4 27L11 24.6C11.6 28.6 9 31.4 5.6 30.8C1 30 .6 24.5 1.8 18C3 11.5 4.6 5 .1 .7Z" fill="currentColor"/><path d="M10.4 24.2L11.7 17.1L20.8 5.5L30.4 14.5L18.8 22.9Z" fill="currentColor"/><path d="M22.9 4.3L27.8 -.1L32.4 6.1L29.6 11.4Z" fill="currentColor"/><circle cx="20.8" cy="13.9" r="2" fill="#353535"/><path d="M10.4 24.2L19.6 15" stroke="#353535" stroke-width="1.1"/></svg>
<svg class="ic sh" style="left:16.0px;top:948.5px;width:32px;height:32px;color:#ecebe9;" viewBox="0 0 32 32"><path d="M-.3 29L9.3 2.2H14.9L24.4 29H18.8L16.8 22.9H7.2L5.2 29ZM8.5 18.6H15.5L12.05 7.4Z" fill="currentColor"/><path d="M27.8 1.5V30M25.3 .9H27L27.8 1.8L28.6 .9H30.4M25.3 30.6H27L27.8 29.7L28.6 30.6H30.4" fill="none" stroke="currentColor" stroke-width="1.5" /></svg>
<svg class="ic sh" style="left:16.0px;top:1013.5px;width:32px;height:32px;color:#ecebe9;" viewBox="0 0 32 32"><rect x="1.4" y="1.2" width="29.1" height="29.1" fill="none" stroke="#c9c9c7" stroke-width="1.3"/><path d="M3.3 3.1H28.5L3.3 28.5Z" fill="#ecebe9"/><path d="M28.5 3.1V28.5H3.3Z" fill="#9a9a98"/><path d="M7.9 9L24.2 22.8" stroke="#2c2c2c" stroke-width="1.6"/><rect x="5.3" y="6.4" width="5.2" height="5.2" fill="#2c2c2c"/><rect x="21.6" y="20.2" width="5.2" height="5.2" fill="#2c2c2c"/></svg>
<svg class="ic sh" style="left:16.0px;top:1077.5px;width:32px;height:32px;color:#ecebe9;" viewBox="0 0 32 32"><defs><pattern id="mchk" width="1.6" height="1.6" patternUnits="userSpaceOnUse"><rect width=".8" height=".8" fill="#a8a8a6"/><rect x=".8" y=".8" width=".8" height=".8" fill="#a8a8a6"/></pattern></defs><path d="M6 4.5C12 2 20 7 27 4.5C30 12 24 20 27.5 27.5C20 30 12 24 5 27.5C1.5 20 8.5 12 6 4.5Z" fill="#4a4a4a"/><path d="M6 4.5C12 2 20 7 27 4.5C30 12 24 20 27.5 27.5C20 30 12 24 5 27.5C1.5 20 8.5 12 6 4.5Z" fill="url(#mchk)" stroke="currentColor" stroke-width=".9"/><path d="M.8 .9H7.9V8H.8ZM24 .9H31.1V8H24ZM.8 24.2H7.9V31.3H.8ZM24 24.2H31.1V31.3H24Z" fill="currentColor"/></svg>
<svg class="ic sh" style="left:16.0px;top:1142.0px;width:32px;height:32px;color:#ecebe9;" viewBox="0 0 32 32"><ellipse cx="23.4" cy="5" rx="7" ry="4.4" transform="rotate(-45 23.4 5)" fill="currentColor"/><path d="M13.9 8.2L22.7 14.7" fill="none" stroke="currentColor" stroke-width="2.1" /><path d="M17 9.5L20.6 12.2L10.3 25L8.5 23.8Z" fill="currentColor"/><path d="M9.8 24.5C11.5 28 10.5 31 8 31.5C5.5 32 4 29.5 5 27.5C6 26 8 25.8 9.8 24.5Z" fill="currentColor"/></svg>
<svg class="ic sh" style="left:16.0px;top:1205.5px;width:32px;height:32px;color:#ecebe9;" viewBox="0 0 32 32"><path d="M2 29V17.5C2 15 3.5 13.8 6 13L16.9 9.3L23.1 11.6L30.2 21.1L18.2 31.2L7.4 17.2V29Z" fill="currentColor" stroke="currentColor" stroke-width="1" stroke-linejoin="round"/><rect x="16.9" y=".7" width="6.2" height="16.5" rx="1.6" fill="currentColor" stroke="#353535" stroke-width="1.9" paint-order="stroke"/></svg>
<svg class="ic sh" style="left:16.0px;top:1273.0px;width:32px;height:32px;color:#ecebe9;" viewBox="0 0 32 32"><path d="M1 29.2V17.2C7 17.2 9.5 13 11.5 8.5C13.5 4 16.5 2.2 20 2.2C24 2.2 26.8 5 26.3 8.5C26 10.3 24.3 10.6 23.8 9.3C23.2 7.4 21.3 7 19.8 8.5C17.3 11 18.5 15.2 22 17.2C24.5 18.4 27 17.8 29.8 17.2V29.2Z" fill="currentColor"/></svg>
<svg class="ic sh" style="left:16.0px;top:1336.5px;width:32px;height:32px;color:#ecebe9;" viewBox="0 0 32 32"><path d="M14.6 19.5A3.6 3.6 0 0 1 18.2 15.9H25.8A3.6 3.6 0 0 1 29.4 19.5V30.9H20C17 30.9 14.6 28.5 14.6 26Z" fill="currentColor"/><path d="M16.2 14.9C16.2 12.5 18 10.7 20 10.7H24C26 10.7 27.8 12.5 27.8 14.9Z" fill="currentColor"/><path d="M19.9 10.1V7.5A2 2 0 0 1 24 7.5V10.1Z" fill="currentColor"/><circle cx="5.3" cy="3.3" r="1.6" fill="currentColor"/><circle cx="3.3" cy="8.4" r="1.7" fill="currentColor"/><circle cx="6.2" cy="14.6" r="1.6" fill="currentColor"/><circle cx="9.1" cy="4.9" r="1" fill="currentColor"/><circle cx="8.5" cy="8.4" r="1" fill="currentColor"/><circle cx="10.4" cy="12.2" r="1" fill="currentColor"/><circle cx="11.7" cy="8.1" r=".8" fill="currentColor"/><circle cx="14.2" cy="8.1" r=".7" fill="currentColor"/><circle cx="7.4" cy="11.4" r=".8" fill="currentColor"/><circle cx="12" cy="5.6" r=".7" fill="currentColor"/><circle cx="12.5" cy="10.5" r=".7" fill="currentColor"/></svg>
<svg class="ic sh" style="left:16.0px;top:1400.5px;width:32px;height:32px;color:#ecebe9;" viewBox="0 0 32 32"><path d="M22.7 1.3L30.2 9.6L21.4 18.3L13.9 10.3Z" fill="currentColor" stroke="currentColor" stroke-width="1" stroke-linejoin="round"/><path d="M10.4 12.6L18.6 20.6L13.4 25.8L5.7 17.4Z" fill="currentColor" stroke="currentColor" stroke-width="1" stroke-linejoin="round"/><path d="M1.8 28.9H9.1M16 28.9H30.2" fill="none" stroke="currentColor" stroke-width="3" /></svg>
<svg class="ic sh" style="left:16.0px;top:1464.5px;width:32px;height:32px;color:#ecebe9;" viewBox="0 0 32 32"><rect x="7.9" y=".7" width="10.9" height="9.4" fill="currentColor"/><rect x=".8" y="22.1" width="11.3" height="9.3" fill="currentColor"/><rect x="21" y="22.1" width="11.4" height="9.3" fill="currentColor"/><path d="M11.7 11.4L7 20.4M20.1 4.1L27.2 9.5V20.4" fill="none" stroke="currentColor" stroke-width="1.5" /></svg>
<svg class="ic sh" style="left:16.0px;top:1531.0px;width:32px;height:32px;color:#ecebe9;" viewBox="0 0 32 32"><path d="M9.3 28.1V3H19A3.8 3.8 0 0 1 22.8 6.8V28.1" fill="none" stroke="currentColor" stroke-width="2.9" /><path d="M7.9 28.1H24.2" fill="none" stroke="currentColor" stroke-width="3.8" /><path d="M10.5 6.5H13M10.5 9.4H13M10.5 12.2H13M10.5 14.8H13M10.5 17.4H15.5M10.5 20H13M10.5 22.6H13M10.5 25.2H13" fill="none" stroke="currentColor" stroke-width="1.1" /></svg>
<svg class="ic sh" style="left:16.0px;top:1595.0px;width:32px;height:32px;color:#ecebe9;" viewBox="0 0 32 32"><circle cx="15.3" cy="14.2" r="10.8" fill="none" stroke="currentColor" stroke-width="3.6" /><path d="M23 22.9L29.1 28.4" fill="none" stroke="currentColor" stroke-width="3.8" stroke-linecap="round" stroke-linejoin="round"/></svg>
<svg class="ic sh" style="left:16.0px;top:1658.0px;width:32px;height:32px;color:#ecebe9;" viewBox="0 0 32 32"><path d="M5.2 7.2H15L20.8 13V29H5.2Z" fill="none" stroke="currentColor" stroke-width="2.5" /><path d="M14.5 6.5V13.6H21.5Z" fill="currentColor"/><path d="M10.4 3.3H22.5L26.9 7.6V24.8H24.2" fill="none" stroke="currentColor" stroke-width="2.5" /></svg>
<div class="a" style="left:0;top:416.7px;width:64px;height:1.5px;background:#2c2c2c"></div>
<div class="a" style="left:0;top:738.0px;width:64px;height:1.5px;background:#2c2c2c"></div>
<div class="a" style="left:0;top:995.8px;width:64px;height:1.5px;background:#2c2c2c"></div>
<div class="a" style="left:0;top:1254.3px;width:64px;height:1.5px;background:#2c2c2c"></div>
<div class="a" style="left:0;top:1511.3px;width:64px;height:1.5px;background:#2c2c2c"></div>
<div class="a" style="left:109px;top:264px;width:1673.5px;height:1426px;background:#fff"></div>
<div class="a" style="left:70px;top:224px;width:1712.5px;height:38.5px;background:linear-gradient(#2b2b2b 0,#353535 2.5px,#353535 100%)"></div>
<div class="a" style="left:559.8px;top:224px;width:320.3px;height:38.5px;background:linear-gradient(#161716 0,#1c1d1c 2.5px,#1c1d1c 100%)"></div>
<div class="a" style="left:109px;top:261.8px;width:1673.5px;height:2.2px;background:#ababa9"></div>
<div class="a" style="left:70.3px;top:262px;width:38.7px;height:1428px;background:linear-gradient(to right,#2b2b2b 0,#353535 4px,#353535 100%)"></div>
<div class="a" style="left:70.3px;top:1004px;width:38.7px;height:451px;background:#1c1d1c"></div>
<div class="a" style="left:107.8px;top:262px;width:2.2px;height:1428px;background:#ababa9"></div>
<svg class="a" style="left:0;top:0" width="2880" height="1800" viewBox="0 0 2880 1800"><defs><clipPath id="hr"><rect x="109" y="224" width="1673.5" height="40"/></clipPath><clipPath id="vr"><rect x="70.5" y="264" width="39" height="1426"/></clipPath></defs><g clip-path="url(#hr)" stroke="#b0b0ae" stroke-width="2"><path d="M29.7 256V262"/><path d="M67.7 256V262"/><path d="M105.6 256V262"/><path d="M143.6 256V262"/><path d="M181.5 238V262"/><path d="M219.4 256V262"/><path d="M257.4 256V262"/><path d="M295.3 256V262"/><path d="M333.3 256V262"/><path d="M371.2 250V262"/><path d="M409.1 256V262"/><path d="M447.1 256V262"/><path d="M485.0 256V262"/><path d="M523.0 256V262"/><path d="M560.9 238V262"/><path d="M598.8 256V262"/><path d="M636.8 256V262"/><path d="M674.7 256V262"/><path d="M712.7 256V262"/><path d="M750.6 250V262"/><path d="M788.5 256V262"/><path d="M826.5 256V262"/><path d="M864.4 256V262"/><path d="M902.4 256V262"/><path d="M940.3 238V262"/><path d="M978.2 256V262"/><path d="M1016.2 256V262"/><path d="M1054.1 256V262"/><path d="M1092.1 256V262"/><path d="M1130.0 250V262"/><path d="M1167.9 256V262"/><path d="M1205.9 256V262"/><path d="M1243.8 256V262"/><path d="M1281.8 256V262"/><path d="M1319.7 238V262"/><path d="M1357.6 256V262"/><path d="M1395.6 256V262"/><path d="M1433.5 256V262"/><path d="M1471.5 256V262"/><path d="M1509.4 250V262"/><path d="M1547.3 256V262"/><path d="M1585.3 256V262"/><path d="M1623.2 256V262"/><path d="M1661.2 256V262"/><path d="M1699.1 238V262"/><path d="M1737.0 256V262"/><path d="M1775.0 256V262"/><path d="M1812.9 256V262"/><path d="M1850.9 256V262"/></g><g clip-path="url(#vr)" stroke="#b0b0ae" stroke-width="2"><path d="M102.5 169.5H108"/><path d="M102.5 207.5H108"/><path d="M84 245.4H108"/><path d="M102.5 283.3H108"/><path d="M102.5 321.3H108"/><path d="M102.5 359.2H108"/><path d="M102.5 397.2H108"/><path d="M96 435.1H108"/><path d="M102.5 473.0H108"/><path d="M102.5 511.0H108"/><path d="M102.5 548.9H108"/><path d="M102.5 586.9H108"/><path d="M84 624.8H108"/><path d="M102.5 662.7H108"/><path d="M102.5 700.7H108"/><path d="M102.5 738.6H108"/><path d="M102.5 776.6H108"/><path d="M96 814.5H108"/><path d="M102.5 852.4H108"/><path d="M102.5 890.4H108"/><path d="M102.5 928.3H108"/><path d="M102.5 966.3H108"/><path d="M84 1004.2H108"/><path d="M102.5 1042.1H108"/><path d="M102.5 1080.1H108"/><path d="M102.5 1118.0H108"/><path d="M102.5 1156.0H108"/><path d="M96 1193.9H108"/><path d="M102.5 1231.8H108"/><path d="M102.5 1269.8H108"/><path d="M102.5 1307.7H108"/><path d="M102.5 1345.7H108"/><path d="M84 1383.6H108"/><path d="M102.5 1421.5H108"/><path d="M102.5 1459.5H108"/><path d="M102.5 1497.4H108"/><path d="M102.5 1535.4H108"/><path d="M96 1573.3H108"/><path d="M102.5 1611.2H108"/><path d="M102.5 1649.2H108"/><path d="M102.5 1687.1H108"/><path d="M102.5 1725.1H108"/></g><text x="186.5" y="246" font-size="20.5" fill="#b2b2b0" font-family="Liberation Sans">-250</text><text x="565.9" y="246" font-size="20.5" fill="#b2b2b0" font-family="Liberation Sans">0</text><text x="945.3" y="246" font-size="20.5" fill="#b2b2b0" font-family="Liberation Sans">250</text><text x="1324.7" y="246" font-size="20.5" fill="#b2b2b0" font-family="Liberation Sans">500</text><text x="1704.1" y="246" font-size="20.5" fill="#b2b2b0" font-family="Liberation Sans">750</text><g clip-path="url(#vr)"><text transform="translate(92.6 251.0) rotate(-90)" text-anchor="end" font-size="20.5" fill="#b2b2b0" font-family="Liberation Sans">-500</text><text transform="translate(92.6 630.4) rotate(-90)" text-anchor="end" font-size="20.5" fill="#b2b2b0" font-family="Liberation Sans">-250</text><text transform="translate(92.6 1009.8) rotate(-90)" text-anchor="end" font-size="20.5" fill="#b2b2b0" font-family="Liberation Sans">0</text><text transform="translate(92.6 1389.2) rotate(-90)" text-anchor="end" font-size="20.5" fill="#b2b2b0" font-family="Liberation Sans">250</text></g><path d="M436 254H456.4L446.2 263Z" fill="#a9a9a9"/><path d="M98 613V635L108 624Z" fill="#a9a9a9"/></svg>
<div class="btn dark" style="left:70.3px;top:223.8px;width:39.7px;height:40px;border-radius:11px;background:#323232;border-bottom-color:#0a0a0a"></div>
<svg class="ic sh" style="left:72.0px;top:228.0px;width:32px;height:32px;color:#ecebe9;" viewBox="0 0 32 32"><g transform="translate(0 -1.5)"><rect x="5.9" y="13.9" width="20.3" height="16.3" fill="#000"/><path d="M9.8 14.5V9.95A6.15 6.15 0 0 1 22.1 9.95V14.5" fill="none" stroke="#000" stroke-width="4"/></g><rect x="5.9" y="13.9" width="20.3" height="16.3" fill="currentColor"/><path d="M9.8 14.5V9.95A6.15 6.15 0 0 1 22.1 9.95V14.5" fill="none" stroke="currentColor" stroke-width="4"/></svg>
<svg class="a" style="left:0;top:0" width="2880" height="1800" viewBox="0 0 2880 1800"><defs>
<pattern id="st1" width="40" height="6.1" patternUnits="userSpaceOnUse" patternTransform="translate(0 1239.5) rotate(1.55)"><rect x="0" y="0" width="40" height="2.2" fill="#e0e0e0"/></pattern>
<pattern id="st2" width="40" height="6.15" patternUnits="userSpaceOnUse" patternTransform="translate(1118 1239) rotate(-50.3)"><rect x="0" y="0" width="40" height="2.3" fill="#dcdcdc"/></pattern>
<linearGradient id="fade" x1="1512.5" x2="1517" y1="0" y2="0" gradientUnits="userSpaceOnUse"><stop offset="0" stop-color="#fff" stop-opacity="0"/><stop offset="1" stop-color="#fff" stop-opacity="1"/></linearGradient>
</defs><path d="M1112.1 1447.1L1517 938H1523.6V948.6L1114.5 1460.3L435.5 1366L436 1360L438.8 1353.9Z" fill="#b5b5b5" stroke="#000" stroke-width="1.05" stroke-linejoin="round"/><path d="M1118 1237.2L1517 796.4L1517.5 938L1112.1 1447.1Z" fill="#fff"/><clipPath id="cpR"><path d="M1118 1237.2L1517 796.4L1517.5 938L1112.1 1447.1Z"/></clipPath><path clip-path="url(#cpR)" d="M661.4 1771.2L1555.7 694.1M666.1 1775.2L1560.4 698.0M670.9 1779.1L1565.1 701.9M675.6 1783.0L1569.9 705.8M680.3 1786.9L1574.6 709.8M685.1 1790.9L1579.3 713.7M689.8 1794.8L1584.1 717.6M694.5 1798.7L1588.8 721.6M699.3 1802.7L1593.5 725.5M704.0 1806.6L1598.3 729.4M708.7 1810.5L1603.0 733.3M713.4 1814.4L1607.7 737.3M718.2 1818.4L1612.5 741.2M722.9 1822.3L1617.2 745.1M727.6 1826.2L1621.9 749.1M732.4 1830.1L1626.7 753.0M737.1 1834.1L1631.4 756.9M741.8 1838.0L1636.1 760.8M746.6 1841.9L1640.8 764.8M751.3 1845.9L1645.6 768.7M756.0 1849.8L1650.3 772.6M760.8 1853.7L1655.0 776.6M765.5 1857.6L1659.8 780.5M770.2 1861.6L1664.5 784.4M775.0 1865.5L1669.2 788.3M779.7 1869.4L1674.0 792.3M784.4 1873.4L1678.7 796.2M789.2 1877.3L1683.4 800.1M793.9 1881.2L1688.2 804.1M798.6 1885.1L1692.9 808.0M803.4 1889.1L1697.6 811.9M808.1 1893.0L1702.4 815.8M812.8 1896.9L1707.1 819.8M817.5 1900.9L1711.8 823.7M822.3 1904.8L1716.6 827.6M827.0 1908.7L1721.3 831.6M831.7 1912.6L1726.0 835.5M836.5 1916.6L1730.8 839.4M841.2 1920.5L1735.5 843.3M845.9 1924.4L1740.2 847.3M850.7 1928.4L1744.9 851.2M855.4 1932.3L1749.7 855.1M860.1 1936.2L1754.4 859.1M864.9 1940.1L1759.1 863.0M869.6 1944.1L1763.9 866.9M874.3 1948.0L1768.6 870.8M879.1 1951.9L1773.3 874.8M883.8 1955.9L1778.1 878.7M888.5 1959.8L1782.8 882.6M893.3 1963.7L1787.5 886.6M898.0 1967.6L1792.3 890.5M902.7 1971.6L1797.0 894.4M907.5 1975.5L1801.7 898.3M912.2 1979.4L1806.5 902.3M916.9 1983.4L1811.2 906.2M921.6 1987.3L1815.9 910.1M926.4 1991.2L1820.7 914.1M931.1 1995.1L1825.4 918.0M935.8 1999.1L1830.1 921.9M940.6 2003.0L1834.9 925.8M945.3 2006.9L1839.6 929.8M950.0 2010.9L1844.3 933.7" stroke="#dcdcdc" stroke-width="2.7" fill="none"/><rect x="1506" y="790" width="14" height="150" fill="url(#fade)"/><path d="M1112.1 1447.1L1517 938" fill="none" stroke="#000" stroke-width="1.3" stroke-linejoin="round"/><path d="M1113.2 1454.5L1523.6 939.2" fill="none" stroke="#000" stroke-width="1.05" stroke-linejoin="round"/><path d="M1517 938H1523.6V948.6" fill="none" stroke="#000" stroke-width="1.05" stroke-linejoin="round"/><path d="M439.7 1237.4H1118L1112.1 1447.1L438.8 1353.9C424 1310 424 1276 439.7 1237.4Z" fill="#fff"/><clipPath id="cpF"><path d="M439.7 1237.4H1118L1112.1 1447.1L438.8 1353.9C424 1310 424 1276 439.7 1237.4Z"/></clipPath><path clip-path="url(#cpF)" d="M-358.9 1189.1L1240.5 1232.4M-359.0 1195.2L1240.4 1238.4M-359.2 1201.3L1240.2 1244.5M-359.4 1207.4L1240.0 1250.6M-359.5 1213.5L1239.9 1256.7M-359.7 1219.6L1239.7 1262.8M-359.9 1225.7L1239.5 1268.9M-360.0 1231.8L1239.4 1275.0M-360.2 1237.9L1239.2 1281.1M-360.4 1244.0L1239.0 1287.2M-360.5 1250.0L1238.9 1293.3M-360.7 1256.1L1238.7 1299.4M-360.9 1262.2L1238.6 1305.5M-361.0 1268.3L1238.4 1311.6M-361.2 1274.4L1238.2 1317.7M-361.4 1280.5L1238.1 1323.8M-361.5 1286.6L1237.9 1329.9M-361.7 1292.7L1237.7 1336.0M-361.9 1298.8L1237.6 1342.1M-362.0 1304.9L1237.4 1348.2M-362.2 1311.0L1237.2 1354.3M-362.3 1317.1L1237.1 1360.4M-362.5 1323.2L1236.9 1366.5M-362.7 1329.3L1236.7 1372.6M-362.8 1335.4L1236.6 1378.7M-363.0 1341.5L1236.4 1384.8M-363.2 1347.6L1236.2 1390.9M-363.3 1353.7L1236.1 1397.0M-363.5 1359.8L1235.9 1403.1M-363.7 1365.9L1235.7 1409.2M-363.8 1372.0L1235.6 1415.3M-364.0 1378.1L1235.4 1421.4M-364.2 1384.2L1235.3 1427.5M-364.3 1390.3L1235.1 1433.6M-364.5 1396.4L1234.9 1439.7M-364.7 1402.5L1234.8 1445.8M-364.8 1408.6L1234.6 1451.9M-365.0 1414.7L1234.4 1458.0M-365.2 1420.8L1234.3 1464.1M-365.3 1426.9L1234.1 1470.2M-365.5 1433.0L1233.9 1476.3M-365.6 1439.1L1233.8 1482.4M-365.8 1445.2L1233.6 1488.5M-366.0 1451.3L1233.4 1494.6M-366.1 1457.4L1233.3 1500.7" stroke="#e0e0e0" stroke-width="2.6" fill="none"/><path d="M1118 1237.4L1112.1 1447.1" fill="none" stroke="#000" stroke-width="1"/><path d="M435.5 1227.4C411.5 1270 411.5 1318 435.5 1366L436 1360.2L438.8 1353.9C424 1310 424 1276 439.7 1237.4L436 1237Z" fill="#b5b5b5" stroke="#000" stroke-width="1.05" stroke-linejoin="round"/><path d="M436.3 1237C417.5 1278 417.5 1318 436 1360.2" fill="none" stroke="#000" stroke-width="1.05" stroke-linejoin="round"/><path d="M438.8 1353.9L1112.1 1447.1" fill="none" stroke="#000" stroke-width="1.3" stroke-linejoin="round"/><path d="M436 1360.2L1113.2 1454.5" fill="none" stroke="#000" stroke-width="1.05" stroke-linejoin="round"/><path d="M435.5 1227.4L979.6 791L1523.6 778.3L1118 1227.5Z" fill="#bebebe" stroke="#000" stroke-width="1.05" stroke-linejoin="round"/><path d="M435.5 1227.4H1118V1237.3H436Z" fill="#b5b5b5" stroke="#000" stroke-width="1.3" stroke-linejoin="round"/><path d="M1118 1227.5L1523.6 778.3V788.3L1118 1237.3Z" fill="#b5b5b5" stroke="#000" stroke-width="1.3" stroke-linejoin="round"/><path d="M858.4 888.3V875.3L979.6 778.4L1179.3 773.6V786.7C1103.1 864.2 996.4 882.4 858.4 888.3Z" fill="#377e7f" stroke="#000" stroke-width="1.05" stroke-linejoin="round"/><path d="M858.4 875.3C996.4 869.4 1103.1 851.2 1179.3 773.6" fill="none" stroke="#000" stroke-width="1.05" stroke-linejoin="round"/><path d="M807.5 1227.4V1204.6C915.9 1110.9 1072.5 1055.2 1251.4 1057.1V1079.5L1118.2 1227.4Z" fill="#377e7f" stroke="#000" stroke-width="1.05" stroke-linejoin="round"/><path d="M807.5 1204.6H1118.2L1251.4 1057.1M1118.2 1204.6V1227.4" fill="none" stroke="#000" stroke-width="1.05" stroke-linejoin="round"/></svg>
<div class="a" style="left:1782.5px;top:224px;width:51.4px;height:1503px;background:#323232"></div>
<div class="a" style="left:67px;top:1690px;width:1767px;height:36px;background:#323232"></div>
<div class="a" style="left:76px;top:1700px;width:1700px;height:16px;border-radius:8px;background:#a5a5a3"></div>
<div class="a" style="left:1800px;top:274px;width:16px;height:1325px;border-radius:8px;background:#a5a5a3"></div>
<div class="btn dark" style="left:1782.3px;top:224.1px;width:51.4px;height:43.5px;border-radius:11px;background:#323232;border-bottom-color:#0c0c0c"></div>
<svg class="ic sh" style="left:1792.0px;top:230.0px;width:32px;height:32px;color:#ecebe9;" viewBox="0 0 32 32"><rect x="3" y="4.9" width="26" height="18" rx="3" fill="none" stroke="#000" stroke-width="2.3" transform="translate(0 -1.3)"/><rect x="3" y="4.9" width="26" height="18" rx="3" fill="none" stroke="#fff" stroke-width="2.3"/><path d="M12.1 24H20V26.3H24.2V28H8V26.3H12.1Z" fill="currentColor"/><circle cx="27" cy="5" r="5.1" fill="#a3a3a1" stroke="#2e2e2e" stroke-width="2.2" paint-order="stroke"/></svg>
<div class="btn blue" style="left:1782.3px;top:1690.1px;width:51.4px;height:35.7px;border-radius:10px"></div>
<svg class="ic sh" style="left:1792.1px;top:1692.0px;width:32px;height:32px;color:#ecebe9;" viewBox="0 0 32 32"><defs><clipPath id="cmsc"><rect x="-10" y="-2" width="52" height="33.6"/></clipPath></defs><g clip-path="url(#cmsc)"><circle cx="15.4" cy="9.4" r="6.8" fill="none" stroke="#fff" stroke-width="2.3"/><circle cx="7.5" cy="23.2" r="6.8" fill="none" stroke="#fff" stroke-width="2.3"/><circle cx="23.5" cy="23.2" r="6.8" fill="none" stroke="#fff" stroke-width="2.3"/><circle cx="7.5" cy="23.2" r="4.2" fill="currentColor"/><circle cx="23.5" cy="23.2" r="4.2" fill="currentColor"/></g></svg>
<svg class="a" style="left:1840px;top:958px" width="12" height="32"><circle cx="6" cy="7" r="3" fill="#ecebe9"/><circle cx="6" cy="16" r="3" fill="#ecebe9"/><circle cx="6" cy="25" r="3" fill="#ecebe9"/></svg>
<div class="a" style="left:2px;top:1730px;width:66.5px;height:66px;background:#fff"></div>
<svg class="a" style="left:2px;top:1730px" width="66.5" height="66" viewBox="0 0 66.5 66"><path d="M6 6.5L60.5 60M60.5 6.5L6 60" stroke="#b5333f" stroke-width="4.4" stroke-linecap="round"/></svg>
<svg class="a" style="left:0;top:1764px" width="2700" height="32"><rect x="70.3" y="0" width="32" height="32" fill="#000000"/><rect x="104.3" y="0" width="32" height="32" fill="#1a1a1a"/><rect x="138.3" y="0" width="32" height="32" fill="#333333"/><rect x="172.3" y="0" width="32" height="32" fill="#4d4d4d"/><rect x="206.3" y="0" width="32" height="32" fill="#666666"/><rect x="240.3" y="0" width="32" height="32" fill="#808080"/><rect x="274.3" y="0" width="32" height="32" fill="#999999"/><rect x="308.3" y="0" width="32" height="32" fill="#b3b3b3"/><rect x="342.3" y="0" width="32" height="32" fill="#cccccc"/><rect x="376.3" y="0" width="32" height="32" fill="#e6e6e6"/><rect x="410.3" y="0" width="32" height="32" fill="#ececec"/><rect x="444.3" y="0" width="32" height="32" fill="#f2f2f2"/><rect x="478.3" y="0" width="32" height="32" fill="#f9f9f9"/><rect x="512.3" y="0" width="32" height="32" fill="#ffffff"/><rect x="546.3" y="0" width="32" height="32" fill="#75140c"/><rect x="580.3" y="0" width="32" height="32" fill="#ea3323"/><rect x="614.3" y="0" width="32" height="32" fill="#808026"/><rect x="648.3" y="0" width="32" height="32" fill="#ffff54"/><rect x="682.3" y="0" width="32" height="32" fill="#377e22"/><rect x="716.3" y="0" width="32" height="32" fill="#75fb4c"/><rect x="750.3" y="0" width="32" height="32" fill="#377e7f"/><rect x="784.3" y="0" width="32" height="32" fill="#75fbfd"/><rect x="818.3" y="0" width="32" height="32" fill="#00007b"/><rect x="852.3" y="0" width="32" height="32" fill="#0000f5"/><rect x="886.3" y="0" width="32" height="32" fill="#75147c"/><rect x="920.3" y="0" width="32" height="32" fill="#ea33f7"/><rect x="954.3" y="0" width="32" height="32" fill="#270301"/><rect x="988.3" y="0" width="32" height="32" fill="#4d0a05"/><rect x="1022.3" y="0" width="32" height="32" fill="#75140c"/><rect x="1056.3" y="0" width="32" height="32" fill="#9c1f14"/><rect x="1090.3" y="0" width="32" height="32" fill="#c2291b"/><rect x="1124.3" y="0" width="32" height="32" fill="#ea3323"/><rect x="1158.3" y="0" width="32" height="32" fill="#ea4338"/><rect x="1192.3" y="0" width="32" height="32" fill="#ec625c"/><rect x="1226.3" y="0" width="32" height="32" fill="#ef8784"/><rect x="1260.3" y="0" width="32" height="32" fill="#f3aeac"/><rect x="1294.3" y="0" width="32" height="32" fill="#f8d7d6"/><rect x="1328.3" y="0" width="32" height="32" fill="#240d0c"/><rect x="1362.3" y="0" width="32" height="32" fill="#491a18"/><rect x="1396.3" y="0" width="32" height="32" fill="#6e2825"/><rect x="1430.3" y="0" width="32" height="32" fill="#933531"/><rect x="1464.3" y="0" width="32" height="32" fill="#b8433d"/><rect x="1498.3" y="0" width="32" height="32" fill="#c56663"/><rect x="1532.3" y="0" width="32" height="32" fill="#d28b89"/><rect x="1566.3" y="0" width="32" height="32" fill="#e0b1b0"/><rect x="1600.3" y="0" width="32" height="32" fill="#efd8d8"/><rect x="1634.3" y="0" width="32" height="32" fill="#231c1c"/><rect x="1668.3" y="0" width="32" height="32" fill="#453837"/><rect x="1702.3" y="0" width="32" height="32" fill="#685453"/><rect x="1736.3" y="0" width="32" height="32" fill="#8c7070"/><rect x="1770.3" y="0" width="32" height="32" fill="#a89493"/><rect x="1804.3" y="0" width="32" height="32" fill="#c5b8b7"/><rect x="1838.3" y="0" width="32" height="32" fill="#e2dbdb"/><rect x="1872.3" y="0" width="32" height="32" fill="#281203"/><rect x="1906.3" y="0" width="32" height="32" fill="#4f2509"/><rect x="1940.3" y="0" width="32" height="32" fill="#773812"/><rect x="1974.3" y="0" width="32" height="32" fill="#9e4a1b"/><rect x="2008.3" y="0" width="32" height="32" fill="#c55d24"/><rect x="2042.3" y="0" width="32" height="32" fill="#ed702d"/><rect x="2076.3" y="0" width="32" height="32" fill="#ef8641"/><rect x="2110.3" y="0" width="32" height="32" fill="#f19e62"/><rect x="2144.3" y="0" width="32" height="32" fill="#f4b688"/><rect x="2178.3" y="0" width="32" height="32" fill="#f7ceaf"/><rect x="2212.3" y="0" width="32" height="32" fill="#fbe7d7"/><rect x="2246.3" y="0" width="32" height="32" fill="#26180d"/><rect x="2280.3" y="0" width="32" height="32" fill="#4b2f1a"/><rect x="2314.3" y="0" width="32" height="32" fill="#714628"/><rect x="2348.3" y="0" width="32" height="32" fill="#975d36"/><rect x="2382.3" y="0" width="32" height="32" fill="#bc7543"/><rect x="2416.3" y="0" width="32" height="32" fill="#c99067"/><rect x="2450.3" y="0" width="32" height="32" fill="#d6ac8c"/><rect x="2484.3" y="0" width="32" height="32" fill="#e3c7b2"/><rect x="2518.3" y="0" width="32" height="32" fill="#f1e4d8"/><rect x="2552.3" y="0" width="32" height="32" fill="#231f1c"/><rect x="2586.3" y="0" width="32" height="32" fill="#463e38"/><rect x="2620.3" y="0" width="32" height="32" fill="#6a5e54"/><rect x="2654.3" y="0" width="32" height="32" fill="#8e7d71"/></svg>
<svg class="a" style="left:2720px;top:1745px" width="110" height="34" viewBox="2720 1745 110 34"><path d="M2731.7 1768.4L2744 1755.7L2756.4 1768.4M2793.6 1755.6L2806 1768.3L2818.4 1755.6" fill="none" stroke="#ecebe9" stroke-width="3.8" stroke-linecap="round" stroke-linejoin="round"/></svg>
<div class="btn dark" style="left:2838.3px;top:1742.4px;width:40.2px;height:55.3px;border-radius:11px;background:#323232;border-bottom-color:#0a0a0a"></div>
<svg class="a" style="left:2840px;top:1750px" width="36" height="40" viewBox="2840 1750 36 40"><path d="M2844 1758.6H2872.1M2844 1768.7H2872.1M2844 1778.7H2872.1" stroke="#000" stroke-width="4"/><path d="M2844 1760H2872.1M2844 1770.1H2872.1M2844 1780.1H2872.1" stroke="#ecebe9" stroke-width="4"/></svg>
<div class="a" style="left:1858px;top:234px;width:1011.5px;height:1481px;background:#2d2d2d"></div>
<div class="a" style="left:1858px;top:234px;width:1011.5px;height:73px;background:#272727"></div>
<div class="a" style="left:1858px;top:305.5px;width:1011.5px;height:2.4px;background:#1b1b1b"></div>
<div class="a" style="left:2004px;top:234px;width:276px;height:66px;background:#2d2d2d"></div>
<div class="a" style="left:2004px;top:299.5px;width:276px;height:8px;background:#2b55a0"></div>
<svg class="ic sh" style="left:1914.0px;top:253.8px;width:32px;height:32px;color:#ecebe9;" viewBox="0 0 32 32"><path d="M.1 9.9L7.2 4.2H23.9L16.9 9.9ZM4.1 20L11.3 14.1H28L20.8 20ZM8.1 30.2L15.3 24.1H32L24.9 30.2Z" fill="currentColor"/></svg>
<svg class="ic sh" style="left:2027.3px;top:253.8px;width:32px;height:32px;color:#ecebe9;" viewBox="0 0 32 32"><path d="M1.3 26V.9H24.4" fill="none" stroke="currentColor" stroke-width="2.2" /><path d="M30.6 1.2C31.5 .8 32.3 1.6 31.8 2.5L19.3 23.2L13.4 19.2Z" fill="currentColor"/><path d="M12.3 20.6L17.8 24.4C18 29.5 12 32.6 2.5 29.6C7.5 27.5 7 21.5 12.3 20.6Z" fill="currentColor"/></svg>
<div class="t" style="left:2063.2px;top:253.8px;font-size:24px;line-height:28px;color:#ecebe9;letter-spacing:0.17px;-webkit-text-stroke:.22px #ecebe9" id="fs">Fill and Stroke</div>
<svg class="a" style="left:2231px;top:261px" width="18" height="18"><path d="M2.5 2.5L15.5 15.5M15.5 2.5L2.5 15.5" stroke="#9a9a98" stroke-width="3.6"/></svg>
<svg class="ic sh" style="left:2338.0px;top:254.0px;width:32px;height:32px;color:#ecebe9;" viewBox="0 0 32 32"><path d="M0 20.8L7.8 10V16H24V32H16.1V24.1H7.8V30Z" fill="currentColor"/><circle cx="22" cy="9.9" r="10.1" fill="currentColor" stroke="#262626" stroke-width="2.2" paint-order="stroke"/><path d="M23 4.2V11H16.2" fill="none" stroke="#111" stroke-width="1.9"/></svg>
<div class="a" style="left:2808px;top:239.8px;width:59.8px;height:60.2px;border-radius:9px;background:#2c2c2c"></div>
<svg class="a" style="left:2822px;top:259.8px" width="32" height="22"><path d="M3.6 4L16.2 16.6L28.8 4" fill="none" stroke="#8e8e8c" stroke-width="4" stroke-linecap="round"/></svg>
<div class="a" style="left:1860px;top:312px;width:1008px;height:1197.5px;border:2px solid #1b1b1b;background:#2d2d2d"></div>
<div class="a" style="left:1862px;top:314px;width:1004px;height:53px;background:#272727"></div>
<div class="a" style="left:1862px;top:366px;width:1004px;height:2.2px;background:#1b1b1b"></div>
<div class="a" style="left:1876px;top:362px;width:168px;height:8px;background:#2b55a0"></div>
<div class="a" style="left:1893px;top:327px;width:26px;height:26px;background:#ecebe9"></div>
<div class="t" style="left:1930px;top:326px;font-size:24px;line-height:28px;color:#ecebe9;letter-spacing:.87px;-webkit-text-stroke:.22px #ecebe9" id="zal">Заливка</div>
<div class="a" style="left:2077px;top:327px;width:26px;height:26px;border:2.2px solid #ecebe9"></div>
<div class="t" style="left:2114px;top:326px;font-size:24px;line-height:28px;color:#ecebe9;letter-spacing:.67px;-webkit-text-stroke:.22px #ecebe9" id="obv">Обводка</div>
<svg class="a" style="left:2262px;top:326px" width="28" height="28" viewBox="0 0 28 28"><path d="M1 8H22M1 26.5H27" stroke="#ecebe9" stroke-width="2.2" fill="none"/><path d="M17 1.5L26.5 8L17 14.5Z" fill="#ecebe9"/><path d="M1 17H8M13 17H20" stroke="#ecebe9" stroke-width="2.2"/></svg>
<div class="t" style="left:2300px;top:326px;font-size:24px;line-height:28px;color:#ecebe9;letter-spacing:.8px;-webkit-text-stroke:.22px #ecebe9" id="stl">Стиль обводки</div>
<svg class="ic" style="left:1882.0px;top:388.0px;width:32px;height:32px;color:#585858;" viewBox="0 0 32 32"><path d="M9.3 9.3L22.7 22.7M22.7 9.3L9.3 22.7" fill="none" stroke="currentColor" stroke-width="3.2" stroke-linecap="round" stroke-linejoin="round"/></svg>
<svg class="ic" style="left:1938.0px;top:388.0px;width:32px;height:32px;color:#585858;" viewBox="0 0 32 32"><rect width="32" height="31.8" fill="#555555"/></svg>
<svg class="ic" style="left:1994.0px;top:388.0px;width:32px;height:32px;color:#585858;" viewBox="0 0 32 32"><defs><pattern id="pc1" width="2" height="2" patternUnits="userSpaceOnUse"><rect width="1" height="1" fill="#505050"/><rect x="1" y="1" width="1" height="1" fill="#505050"/></pattern></defs><rect width="8" height="31.8" fill="#555"/><rect x="8" width="8" height="31.8" fill="url(#pc1)"/><rect x="16" width="8" height="31.8" fill="#474747"/><rect x="24" width="8" height="31.8" fill="url(#pc1)" opacity=".85"/></svg>
<svg class="ic" style="left:2050.0px;top:388.0px;width:32px;height:32px;color:#585858;" viewBox="0 0 32 32"><defs><pattern id="pc2" width="2" height="2" patternUnits="userSpaceOnUse"><rect width="1" height="1" fill="#4c4c4c"/><rect x="1" y="1" width="1" height="1" fill="#4c4c4c"/></pattern></defs><rect x="1.6" y="1.3" width="28.8" height="29.2" fill="url(#pc2)" opacity=".7"/><rect x="6" y="6" width="20" height="20" fill="url(#pc2)"/><rect x="11.5" y="11.5" width="9.3" height="9.3" fill="#555"/></svg>
<svg class="ic" style="left:2106.0px;top:388.0px;width:32px;height:32px;color:#585858;" viewBox="0 0 32 32"><path d="M1 1H16V16H1ZM16 16H31V31H16Z" fill="#454545"/><path d="M16 1H31V16H16ZM1 16H16V31H1Z" fill="#282828"/><rect x=".9" y=".9" width="30.2" height="30.2" rx="2.6" fill="none" stroke="#555" stroke-width="1.8"/></svg>
<svg class="ic" style="left:2162.0px;top:388.0px;width:32px;height:32px;color:#585858;" viewBox="0 0 32 32"><defs><clipPath id="pdc"><rect width="32" height="31.8"/></clipPath></defs><g clip-path="url(#pdc)" fill="#575757"><circle cx="11.9" cy="0" r="4.1"/><circle cx="28" cy="0" r="4.1"/><circle cx="4.1" cy="7.2" r="4.1"/><circle cx="20" cy="7.2" r="4.1"/><circle cx="11.9" cy="13.1" r="4.1"/><circle cx="28" cy="13.1" r="4.1"/><circle cx="4.1" cy="19" r="4.1"/><circle cx="20" cy="19" r="4.1"/><circle cx="11.9" cy="25.2" r="4.1"/><circle cx="28" cy="25.2" r="4.1"/><circle cx="4.1" cy="31.7" r="4.1"/><circle cx="20" cy="31.7" r="4.1"/></g></svg>
<svg class="ic" style="left:2218.0px;top:388.0px;width:32px;height:32px;color:#585858;" viewBox="0 0 32 32"><rect x=".9" y=".9" width="30.2" height="12.6" fill="#3f3f3f" stroke="#555" stroke-width="1.8"/><circle cx="7" cy="7" r="2" fill="#575757"/><path d="M.9 14V30.9H13V14" fill="none" stroke="#555" stroke-width="1.8"/><path d="M5.2 14L22.8 28.6L31 18.3L24.4 13.6Z" fill="#3f3f3f" stroke="#555" stroke-width="1.6"/></svg>
<svg class="ic" style="left:2274.0px;top:388.0px;width:32px;height:32px;color:#585858;" viewBox="0 0 32 32"><path d="M1.3 6.5C3 2 6.5 0 10.8 0C16 0 19.4 3 19.4 7.6C19.4 11 17.5 12.8 15.4 14.4C13.5 15.8 12.9 17 12.9 19.5V20.5H7.6V19C7.6 15.5 8.8 13.8 11 12.2C12.8 10.9 13.8 9.8 13.8 8C13.8 5.9 12.6 4.7 10.6 4.7C8.6 4.7 7.2 5.9 6.3 8.4Z" fill="currentColor" transform="translate(6 0)"/><circle cx="16.3" cy="28" r="3.8" fill="currentColor"/></svg>
<svg class="ic" style="left:2330.0px;top:388.0px;width:32px;height:32px;color:#585858;" viewBox="0 0 32 32"><path fill-rule="evenodd" d="M16.1 6.5C21 -2.5 34 -1.5 31.6 12C30 23 23 31.8 16.1 31.8C9.2 31.8 2 23 .4 12C-2 -1.5 11 -2.5 16.1 6.5ZM16.1 6.5C12 12 8.8 17 8.8 20.5C8.8 23.5 11.5 25.2 16.1 25.2C20.7 25.2 23.4 23.5 23.4 20.5C23.4 17 20.2 12 16.1 6.5Z" fill="#575757"/></svg>
<div class="btn blue" style="left:2374.5px;top:377px;width:55px;height:55px;border-radius:10px"></div>
<svg class="ic" style="left:2386.0px;top:388.0px;width:32px;height:32px;color:#5a6f9b;" viewBox="0 0 32 32"><path d="M16.1 6.5C21 -2.5 34 -1.5 31.6 12C30 23 23 31.8 16.1 31.8C9.2 31.8 2 23 .4 12C-2 -1.5 11 -2.5 16.1 6.5Z" fill="#55688a"/></svg>
<div class="t" style="left:1878.5px;top:438px;font-size:24px;line-height:28px;font-weight:bold;color:#f1f1ef;letter-spacing:-.2px" id="nosel">Нет выбранных объектов</div>
<div class="t" style="left:0;width:2644px;top:1534px;font-size:24px;line-height:28px;color:#9b9b99;text-align:right;letter-spacing:.5px" id="blend">Режим смешивания:</div>
<div class="btn dark" style="left:2644.3px;top:1516.9px;width:219.4px;height:66.4px;background:#323232;border-color:#1c1c1c"></div>
<div class="t" style="left:2666.3px;top:1534px;font-size:24px;line-height:28px;color:#9b9b99;letter-spacing:.8px">Normal</div>
<svg class="a" style="left:2816px;top:1544.5px" width="25" height="13" viewBox="0 0 25 13"><path d="M0 0H25L12.5 12.5Z" fill="#9b9b99"/></svg>
<div class="a" style="left:1867.8px;top:1590.6px;width:991.5px;height:52.4px;border:2px solid #1c1c1c;border-radius:10px;background:#323232"></div>
<div class="t" style="left:1877.2px;top:1599.1999999999998px;font-size:24px;line-height:28px;color:#8d8d8b;letter-spacing:0.64px;">Размытие (%)</div>
<div class="a" style="left:2714px;top:1591.6px;width:2px;height:50.4px;background:#1c1c1c"></div>
<div class="a" style="left:2790px;top:1592.6px;width:1.5px;height:48.4px;background:#2a2a2a"></div>
<div class="a" style="left:2824.2px;top:1592.6px;width:1.5px;height:48.4px;background:#2a2a2a"></div>
<div class="t" style="left:2727.6px;top:1599.1999999999998px;font-size:24px;line-height:28px;color:#9b9b99">0,0</div>
<div class="a" style="left:2794.3px;top:1615.3px;width:27.2px;height:3px;background:#4d4d4d"></div>
<div class="a" style="left:2828.4px;top:1615.3px;width:27.4px;height:3px;background:#4d4d4d"></div>
<div class="a" style="left:2840.4px;top:1602.8px;width:3px;height:28px;background:#4d4d4d"></div>
<div class="a" style="left:1867.8px;top:1652.5px;width:991.5px;height:52.4px;border:2px solid #1c1c1c;border-radius:10px;background:#323232"></div>
<div class="t" style="left:1877.2px;top:1661.1px;font-size:24px;line-height:28px;color:#ffffff;letter-spacing:0.54px;-webkit-text-stroke:.3px #fff;">Непрозрачность (%)</div>
<div class="a" style="left:2714px;top:1653.5px;width:2px;height:50.4px;background:#1c1c1c"></div>
<div class="a" style="left:2790px;top:1654.5px;width:1.5px;height:48.4px;background:#2a2a2a"></div>
<div class="a" style="left:2824.2px;top:1654.5px;width:1.5px;height:48.4px;background:#2a2a2a"></div>
<div class="t" style="left:2728.6px;top:1661.1px;font-size:24px;line-height:28px;color:#9b9b99">100,0</div>
<div class="a" style="left:2794.3px;top:1677.2px;width:27.2px;height:3px;background:#4d4d4d"></div>
<div class="a" style="left:2828.4px;top:1677.2px;width:27.4px;height:3px;background:#4d4d4d"></div>
<div class="a" style="left:2840.4px;top:1664.7px;width:3px;height:28px;background:#4d4d4d"></div>
</div></body></html>
